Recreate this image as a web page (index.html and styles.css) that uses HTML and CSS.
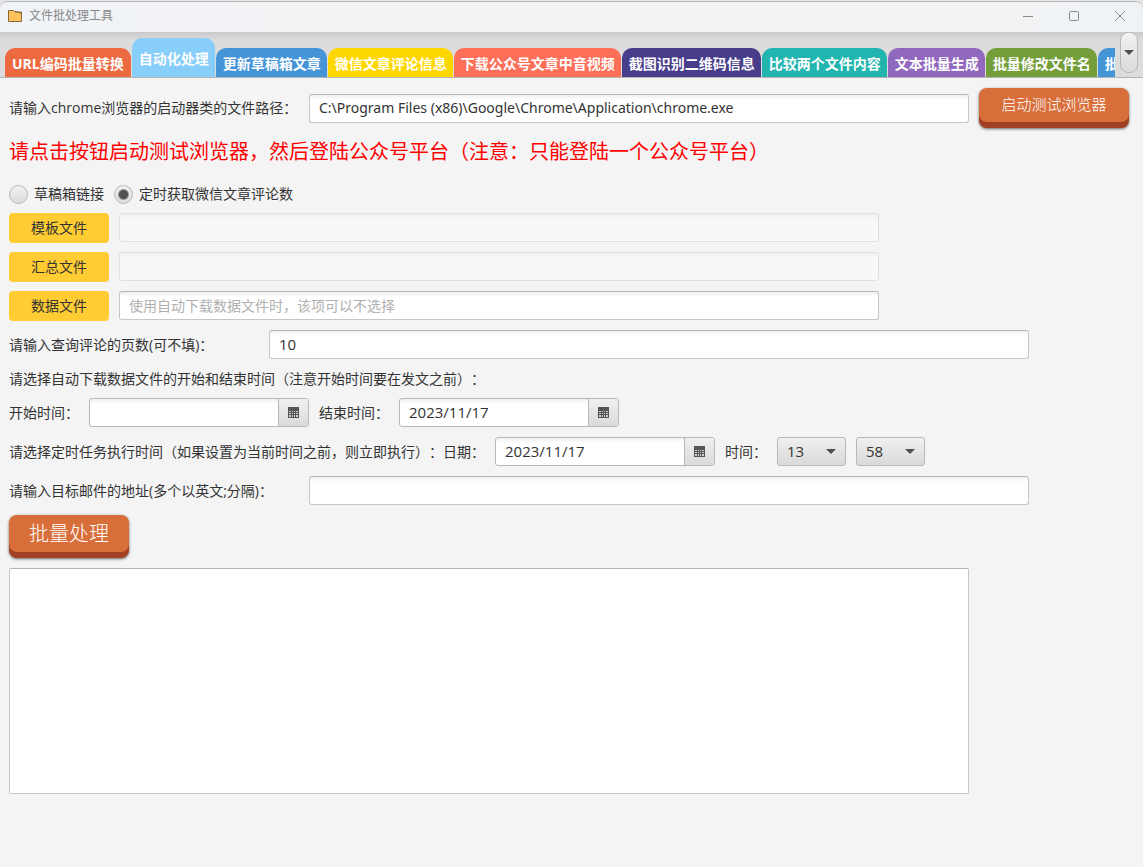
FILE: index.html
```
<!DOCTYPE html>
<html lang="zh-CN">
<head>
<meta charset="utf-8">
<title>文件批处理工具</title>
<link rel="stylesheet" href="styles.css">
</head>
<body>
<div class="window">
  <header class="titlebar">
    <svg class="app-icon" width="16" height="14" viewBox="0 0 16 14"><path d="M1.5 1.5h5l1.500 1.500h6.500v9.500h-13z" fill="#ffc15e" stroke="#85693d"/><path d="M8 2l6.500 2.500" stroke="#85693d" fill="none"/></svg>
    <h1 class="title">文件批处理工具</h1>
    <div class="window-buttons">
      <button class="win-btn" aria-label="最小化"><svg width="12" height="12" viewBox="0 0 12 12"><path d="M1 6.500h10"/></svg></button>
      <button class="win-btn" aria-label="最大化"><svg width="12" height="12" viewBox="0 0 12 12"><rect x="1.500" y="1.500" width="9" height="9" rx="1"/></svg></button>
      <button class="win-btn" aria-label="关闭"><svg width="12" height="12" viewBox="0 0 12 12"><path d="M1 1l10 10M11 1L1 11"/></svg></button>
    </div>
  </header>
  <nav class="tabbar">
    <div class="tabs">
      <button class="tab tab-orange">URL编码批量转换</button>
      <button class="tab tab-active">自动化处理</button>
      <button class="tab tab-blue">更新草稿箱文章</button>
      <button class="tab tab-gold">微信文章评论信息</button>
      <button class="tab tab-coral">下载公众号文章中音视频</button>
      <button class="tab tab-indigo">截图识别二维码信息</button>
      <button class="tab tab-teal">比较两个文件内容</button>
      <button class="tab tab-purple">文本批量生成</button>
      <button class="tab tab-green">批量修改文件名</button>
      <button class="tab tab-blue">批</button>
    </div>
    <button class="tab-menu" aria-label="更多标签"><span class="arrow"></span></button>
  </nav>
  <main class="content">
    <div class="row row-launch">
      <label class="label-wide" for="path">请输入chrome浏览器的启动器类的文件路径：</label>
      <input class="field field-path" id="path" type="text" value="C:\Program Files (x86)\Google\Chrome\Application\chrome.exe">
      <button class="action action-launch">启动测试浏览器</button>
    </div>
    <p class="notice">请点击按钮启动测试浏览器，然后登陆公众号平台（注意：只能登陆一个公众号平台）</p>
    <div class="row row-radio">
      <label class="option"><input class="radio" type="radio" name="mode">草稿箱链接</label>
      <label class="option"><input class="radio" type="radio" name="mode" checked>定时获取微信文章评论数</label>
    </div>
    <div class="row">
      <button class="file-btn">模板文件</button>
      <input class="field field-long" type="text" aria-label="模板文件" disabled>
    </div>
    <div class="row">
      <button class="file-btn">汇总文件</button>
      <input class="field field-long" type="text" aria-label="汇总文件" disabled>
    </div>
    <div class="row">
      <button class="file-btn">数据文件</button>
      <input class="field field-long" type="text" aria-label="数据文件" placeholder="使用自动下载数据文件时，该项可以不选择">
    </div>
    <div class="row">
      <label class="label-mid" for="pages">请输入查询评论的页数(可不填)：</label>
      <input class="field field-long" id="pages" type="text" value="10">
    </div>
    <p class="hint">请选择自动下载数据文件的开始和结束时间（注意开始时间要在发文之前）：</p>
    <div class="row">
      <label for="start">开始时间：</label>
      <div class="date"><input class="date-input" id="start" type="text"><button class="date-btn" aria-label="选择开始时间"><svg width="11" height="11" viewBox="0 0 11 11"><use href="#cal"/></svg></button></div>
      <label for="end">结束时间：</label>
      <div class="date"><input class="date-input" id="end" type="text" value="2023/11/17"><button class="date-btn" aria-label="选择结束时间"><svg width="11" height="11" viewBox="0 0 11 11"><use href="#cal"/></svg></button></div>
    </div>
    <div class="row">
      <label for="day">请选择定时任务执行时间（如果设置为当前时间之前，则立即执行）：日期：</label>
      <div class="date"><input class="date-input" id="day" type="text" value="2023/11/17"><button class="date-btn" aria-label="选择日期"><svg width="11" height="11" viewBox="0 0 11 11"><use href="#cal"/></svg></button></div>
      <label for="hour">时间：</label>
      <div class="combo"><select class="select" id="hour"><option>13</option></select><span class="arrow combo-arrow"></span></div>
      <div class="combo"><select class="select" aria-label="分钟"><option>58</option></select><span class="arrow combo-arrow"></span></div>
    </div>
    <div class="row">
      <label class="label-wide" for="mail">请输入目标邮件的地址(多个以英文;分隔)：</label>
      <input class="field field-mail" id="mail" type="text">
    </div>
    <div class="row"><button class="action action-batch">批量处理</button></div>
    <textarea class="log" aria-label="输出"></textarea>
  </main>
</div>
<svg class="defs" width="0" height="0">
  <defs><g id="cal"><path d="M0 0h11v11H0z" fill="#555"/><path d="M1 4h2v1H1zM4 4h1v1H4zM6 4h1v1H6zM8 4h2v1H8zM1 6h2v1H1zM4 6h1v1H4zM6 6h1v1H6zM8 6h2v1H8zM1 8h2v2H1zM4 8h1v2H4zM6 8h1v2H6zM8 8h2v2H8z" fill="#cfcfcf"/></g></defs>
</svg>
</body>
</html>
```
FILE: styles.css
```
* { box-sizing: border-box; }
body {
  margin: 0;
  background: #e6e6e6;
  color: #333;
  font: 14px/20px "Open Sans", "Noto Sans CJK SC", sans-serif;
  text-spacing-trim: space-all;
}
button, input, select, textarea { font: inherit; color: inherit; margin: 0; }
button { padding: 0; border: 0; }
.defs { position: absolute; }
.window {
  margin-top: 1px;
  min-height: calc(100vh - 1px);
  display: flex;
  flex-direction: column;
  background: #f4f4f4;
  border-top: 1px solid #b4b4b4;
  border-radius: 8px 8px 0 0;
  overflow: hidden;
}
.titlebar {
  display: flex;
  align-items: center;
  height: 30px;
  padding: 0 0 2px 7px;
  background: linear-gradient(90deg, #f0f3f8, #f3f3f3 40%, #f3f3f3 70%, #f0f3f6);
}
.title { margin: 0 auto 0 6px; font-size: 12px; font-weight: 400; color: #888; }
.window-buttons { display: flex; }
.win-btn {
  display: grid;
  place-items: center;
  width: 46px;
  height: 28px;
  background: none;
}
.win-btn svg { fill: none; stroke: #8a8a8a; }
.tabbar {
  display: flex;
  justify-content: space-between;
  height: 46px;
  padding: 0 5px;
  background: linear-gradient(#c9c9c9, #dcdcdc 8px);
  border-bottom: 1px solid #b5b5b5;
}
.tabs {
  display: flex;
  align-items: flex-end;
  gap: 1px;
  flex: 1;
  min-width: 0;
  overflow: hidden;
}
.tab {
  flex: none;
  height: 29px;
  padding: 2px 6px 0 7px;
  border-radius: 10px 10px 0 0;
  color: #fff;
  font-weight: 700;
  white-space: nowrap;
}
.tab:last-child { border-top-right-radius: 0; }
.tab-active { height: 39px; background: #87cefa; }
.tab-orange { padding-right: 7px; background: #ed6a40; }
.tab-blue { background: #4594d8; }
.tab-gold { background: #ffd700; }
.tab-coral { background: #fd6f58; }
.tab-indigo { background: #483d8b; }
.tab-teal { background: #22b5b0; }
.tab-purple { background: #9068be; }
.tab-green { background: #739e3a; }
.tab-menu {
  display: grid;
  place-items: center;
  width: 18px;
  height: 41px;
  margin-left: 5px;
  border: 1px solid #b8b8b8;
  border-radius: 8px;
  background: linear-gradient(#f2f2f2, #dadada);
}
.arrow {
  width: 0;
  border: 5px solid transparent;
  border-top-color: #505050;
  border-bottom: 0;
}
.content {
  display: flex;
  flex-direction: column;
  gap: 9px;
  padding: 10px 14px 20px 9px;
}
.row { display: flex; align-items: flex-start; gap: 10px; }
.row label { flex: none; line-height: 30px; }
.row .label-wide { width: 290px; }
.row .label-mid { width: 250px; }
.row-launch { align-items: center; }
.field {
  height: 29px;
  min-width: 0;
  padding: 0 9px 2px;
  border: 1px solid #c6c6c6;
  border-top-color: #b5b5b5;
  border-radius: 3px;
  background: linear-gradient(#f0f0f0, #fff 5px);
}
.field, .date-input, .select { font-size: 15px; }
.field::placeholder { color: #b0b0b0; font-size: 14px; opacity: 1; }
.field:disabled { border-color: #e0e0e0; background: linear-gradient(#efefef, #f8f8f8 5px); }
.field-path { flex: 1; font-family: "Noto Sans", sans-serif; font-size: 14px; }
.field-long { flex: 0 1 760px; }
.field-mail { flex: 0 1 720px; }
.notice { margin: 0; padding-bottom: 8px; color: #f00; font-size: 20px; line-height: 30px; }
.row .option { display: flex; align-items: center; gap: 6px; line-height: 20px; }
.radio {
  appearance: none;
  width: 19px;
  height: 19px;
  border: 1px solid #b8b8b8;
  border-radius: 50%;
  background: linear-gradient(#f0f0f0, #dcdcdc);
}
.radio:checked { background: radial-gradient(circle, #505050 4px, transparent 6px), linear-gradient(#f0f0f0, #dcdcdc); }
.file-btn {
  flex: none;
  width: 100px;
  height: 30px;
  border-radius: 4px;
  background: #ffcc33;
}
.hint { margin: 0; }
.date {
  display: flex;
  width: 220px;
  height: 29px;
  border: 1px solid #b8b8b8;
  border-radius: 3px;
  overflow: hidden;
  background: linear-gradient(#f0f0f0, #fff 5px);
}
.date-input { flex: 1; min-width: 0; padding: 0 9px 2px; border: 0; background: none; }
.date-btn {
  display: grid;
  place-items: center;
  width: 30px;
  border-left: 1px solid #b8b8b8;
  background: linear-gradient(#f0f0f0, #dadada);
}
.combo { position: relative; width: 69px; height: 29px; }
.select {
  appearance: none;
  width: 100%;
  height: 100%;
  padding: 0 9px 2px;
  border: 1px solid #b8b8b8;
  border-radius: 3px;
  background: linear-gradient(#f0f0f0, #d9d9d9);
}
.combo-arrow { position: absolute; right: 10px; top: 12px; pointer-events: none; }
.action {
  flex: none;
  color: #fff;
  background: #d86e3a;
  border-radius: 8px;
  font-family: KaiTi, "Noto Sans CJK SC", sans-serif;
  font-weight: 300;
  box-shadow: inset 0 -6px #a04024, 0 1px 3px #666;
}
.action-launch { width: 150px; height: 40px; padding-bottom: 8px; font-size: 15px; }
.action-batch { width: 120px; height: 43px; padding-bottom: 8px; font-size: 20px; }
.log {
  display: block;
  width: 100%;
  max-width: 960px;
  height: 226px;
  margin-top: 1px;
  border: 1px solid #c6c6c6;
  border-top-color: #b5b5b5;
  border-radius: 2px;
  background: #fff;
  resize: none;
}
```
